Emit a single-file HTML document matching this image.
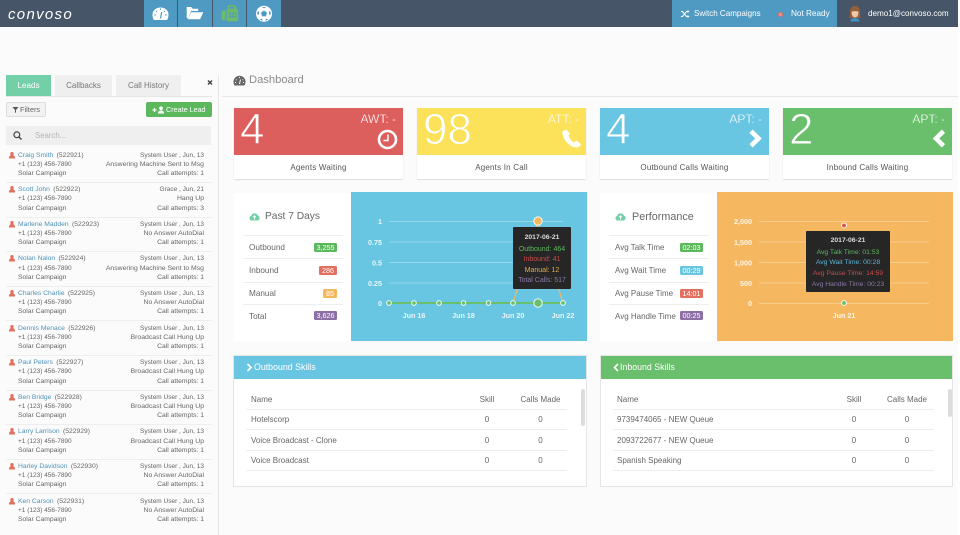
<!DOCTYPE html>
<html><head><meta charset="utf-8"><title>Convoso Dashboard</title>
<style>
*{box-sizing:border-box}
html,body{margin:0;padding:0;width:960px;height:535px;overflow:hidden;background:#fff}
body{font-family:"Liberation Sans",sans-serif;color:#666;position:relative}
#p{position:absolute;left:0;top:0;width:958px;height:535px;background:#fbfbfb;overflow:hidden;filter:blur(.3px)}
.a{position:absolute;white-space:nowrap}
.r{position:absolute;left:0;width:218px;height:35px;font-size:6.75px;color:#666}
.r span{position:absolute;white-space:nowrap;line-height:9px}
.r .n{left:18px;top:0}
.r .n b{font-weight:normal;color:#4f94b8}
.r .n i{font-style:normal;margin-left:1.500px}
.r .p{left:18px;top:9.300px;font-size:6.500px}
.r .k{left:18px;top:18.600px}
.r .u{right:14px;top:0;font-size:6.500px}
.r .s{right:14px;top:9.300px;font-size:6.850px}
.r .t{right:14px;top:18.600px}
.r svg{position:absolute;left:9px;top:1px}
.r hr{position:absolute;left:6px;width:206px;top:31.500px;margin:0;border:0;border-top:1px solid #eee}
.card{position:absolute;top:108px;width:169px;height:71px;background:#fff;box-shadow:0 1px 1px #ddd}
.card .h{position:absolute;left:0;top:0;width:100%;height:47px;background:var(--b)}
.card .num{position:absolute;left:6px;top:-3.500px;font-size:44px;line-height:50px;color:#fff;-webkit-text-stroke:.9px var(--b)}
.card .l{position:absolute;right:7px;top:4px;font-size:12px;line-height:14px;color:#fff;-webkit-text-stroke:.25px var(--b)}
.card .f{position:absolute;left:0;right:0;top:55px;text-align:center;font-size:8px;line-height:10px;color:#555;letter-spacing:.2px}
.card svg{position:absolute}
.lab{font-size:8.200px;color:#666;line-height:10px}
.ln{position:absolute;height:1px;background:#eee}
.bd{position:absolute;height:9px;border-radius:1.500px;color:#fff;font-size:7.200px;line-height:9px;text-align:center}
.tb{position:absolute;top:355px;height:132px;background:#fff;border:1px solid #e5e5e5}
.tb .hd{position:absolute;left:0;right:0;top:0;height:23px;color:#fff;font-size:8.800px;line-height:23px}
.tc{position:absolute;white-space:nowrap;font-size:8px;line-height:10px;color:#666}
.cc{position:absolute;white-space:nowrap;font-size:8px;line-height:10px;color:#666;text-align:center;transform:translateX(-50%)}
.tip{position:absolute;background:#262626;border-radius:1px;text-align:center;font-size:7px}
.tip div{position:absolute;left:0;right:0;line-height:9px}
svg text{font-family:"Liberation Sans",sans-serif}
</style></head><body>
<div id="p">

<!-- top bar -->
<div class="a" style="left:0;top:0;width:958px;height:27px;background:#465568"></div>
<div class="a" style="left:8px;top:5.500px;font-size:15px;line-height:18px;color:#fff;font-style:italic;letter-spacing:1.300px">convoso</div>
<div class="a" style="left:144px;top:0;width:33px;height:27px;background:#4f9ac2"></div>
<div class="a" style="left:178px;top:0;width:34px;height:27px;background:#4f9ac2"></div>
<div class="a" style="left:213px;top:0;width:33px;height:27px;background:#4f9ac2"></div>
<div class="a" style="left:247px;top:0;width:34px;height:27px;background:#4f9ac2"></div>
<svg class="a" style="left:144px;top:0" width="137" height="27">
 <path d="M9.600 19.500C8.900 18 8.500 16.200 8.500 14.500a8 7 0 0 1 16 0c0 1.700-.4 3.500-1.100 5-.2.400-.5.500-1 .500H10.600c-.5 0-.8-.1-1-.5z" fill="#fff"/>
 <path d="M16.500 18.500l1.200-6.500M12.200 11l.6.900M20.800 11l-.6.900M10.500 15h1.300M21.200 15h1.300M16.500 8.500v1.400" stroke="#4f9ac2" stroke-width="1.200" fill="none"/>
 <path d="M42.700 18V7h4.500l1.500 1.800h5.500v2.200H47L44.200 18.500zM47 12.300H59.300L56 19.300H44z" fill="#fff"/>
 <path d="M78.700 10.500h3v9.700h-3a1 1 0 0 1-1-1v-7.700a1 1 0 0 1 1-1zM82.700 9.500h1V5.300h7l2 2.200v2h.5a1 1 0 0 1 1 1v9.700a1 1 0 0 1-1 1H82.700z" fill="#6dbb6a"/>
 <path d="M85.200 12.500h2v2h-2zM88.200 12.500h2v2h-2zM91 12.500h1.500v2H91zM85.200 15.500h2v2h-2zM88.200 15.500h2v2h-2zM91 15.500h1.500v2H91zM85 6.800h5v2h-5z" fill="#4f9ac2"/>
 <circle cx="120" cy="13.700" r="8" fill="#fff"/>
 <path d="M120 10.500l3.100 2.300-1.200 3.600h-3.800l-1.200-3.600z" fill="#4f9ac2"/>
 <path d="M117.800 7h4.400L120 8.300zM113.300 11.600l1.500-.4.300 2.800-1.500 1.300zM126.700 11.600l-1.500-.4-.3 2.800 1.500 1.300zM116 19.200l2-.5.800 1.500-1.200.3zM124 19.200l-2-.5-.8 1.500 1.200.3z" fill="#4f9ac2"/>
</svg>
<div class="a" style="left:672px;top:0;width:165px;height:27px;background:#4f9ac2"></div>
<svg class="a" style="left:680px;top:10px" width="10" height="8"><path d="M1 1.500h1.500l4 5H8M1 6.500h1.500l4-5H8" fill="none" stroke="#fff" stroke-width="1.100"/><path d="M7.500 0l2 1.500-2 1.500zM7.500 5l2 1.500-2 1.500z" fill="#fff"/></svg>
<div class="a" style="left:694px;top:9px;font-size:8.050px;line-height:10px;color:#fff">Switch Campaigns</div>
<div class="a" style="left:778px;top:11.500px;width:5px;height:5px;border-radius:50%;border:1.500px solid #e2705f;background:#d99"></div>
<div class="a" style="left:791px;top:9px;font-size:8.200px;line-height:10px;color:#fff">Not Ready</div>
<svg class="a" style="left:848px;top:5px" width="14" height="17">
 <path d="M7 1C3 1 2 4 2 8c0 3-.5 4-.5 5h11c0-1-.5-2-.5-5 0-4-1-7-5-7z" fill="#97603a"/>
 <ellipse cx="7" cy="8" rx="3.400" ry="4.400" fill="#f0c9a8"/>
 <path d="M3.500 6.500C4 4 6 3 7 3s3 1 3.500 3.500C8 6 6 6 3.500 6.500z" fill="#97603a"/>
 <path d="M2.500 16.500c0-2.500 2-3.500 4.500-3.500s4.500 1 4.500 3.500z" fill="#3f93c4"/>
</svg>
<div class="a" style="left:868px;top:9px;font-size:8.100px;line-height:10px;color:#fff">demo1@convoso.com</div>

<!-- sidebar -->
<div class="a" style="left:218px;top:75px;width:1px;height:460px;background:#e6e6e6"></div>
<div class="a" style="left:6px;top:75px;width:45px;height:21px;background:#72cfa7;color:#fff;font-size:8.200px;line-height:21px;text-align:center">Leads</div>
<div class="a" style="left:55px;top:75px;width:57px;height:21px;background:#efefef;color:#777;font-size:8px;line-height:21px;text-align:center">Callbacks</div>
<div class="a" style="left:116px;top:75px;width:65px;height:21px;background:#efefef;color:#777;font-size:8px;line-height:21px;text-align:center">Call History</div>
<div class="a" style="left:6px;top:96px;width:206px;height:1px;background:#e6e6e6"></div>
<svg class="a" style="left:207px;top:79px" width="6" height="7"><path d="M1 1.500l4 4M5 1.500l-4 4" stroke="#444" stroke-width="1.500"/></svg>
<div class="a" style="left:6px;top:102px;width:40px;height:15px;background:#f2f2f2;border:1px solid #ddd;border-radius:2px"></div>
<svg class="a" style="left:12px;top:106px" width="7" height="7"><path d="M.5 1h6L4 4v3L3 6.300V4z" fill="#555"/></svg>
<div class="a" style="left:20px;top:105px;font-size:7.400px;line-height:9px;color:#666">Filters</div>
<div class="a" style="left:146px;top:102px;width:66px;height:15px;background:#5cb85c;border-radius:2px;color:#fff;font-size:7.200px;line-height:15px;padding-left:20px">Create Lead</div>
<svg class="a" style="left:152px;top:106px" width="13" height="8"><path d="M.5 4h4M2.500 2v4" stroke="#fff" stroke-width="1.200"/><circle cx="9" cy="2.200" r="1.800" fill="#fff"/><path d="M6 7.500c0-2.200 1-3 3-3s3 .8 3 3z" fill="#fff"/></svg>
<div class="a" style="left:6px;top:126px;width:205px;height:19px;background:#efefef"></div>
<svg class="a" style="left:13px;top:131px" width="9" height="9"><circle cx="3.800" cy="3.800" r="2.900" fill="none" stroke="#444" stroke-width="1.200"/><path d="M6 6l2.500 2.500" stroke="#444" stroke-width="1.400"/></svg>
<div class="a" style="left:35px;top:131px;font-size:7.800px;line-height:10px;color:#b5b5b5">Search...</div>

<div class="r" style="top:150.500px"><svg width="6" height="7"><circle cx="3" cy="1.700" r="1.700" fill="#e2705f"/><path d="M0 6.500c0-2.500 1-3.500 3-3.500s3 1 3 3.500z" fill="#e2705f"/></svg><span class="n"><b>Craig Smith</b> <i>(522921)</i></span><span class="p">+1 (123) 456-7890</span><span class="k">Solar Campaign</span><span class="u">System User , Jun, 13</span><span class="s">Answering Machine Sent to Msg</span><span class="t">Call attempts: 1</span><hr></div>
<div class="r" style="top:185.100px"><svg width="6" height="7"><circle cx="3" cy="1.700" r="1.700" fill="#e2705f"/><path d="M0 6.500c0-2.500 1-3.500 3-3.500s3 1 3 3.500z" fill="#e2705f"/></svg><span class="n"><b>Scott John</b> <i>(522922)</i></span><span class="p">+1 (123) 456-7890</span><span class="k">Solar Campaign</span><span class="u">Grace , Jun, 21</span><span class="s">Hang Up</span><span class="t">Call attempts: 3</span><hr></div>
<div class="r" style="top:219.700px"><svg width="6" height="7"><circle cx="3" cy="1.700" r="1.700" fill="#e2705f"/><path d="M0 6.500c0-2.500 1-3.500 3-3.500s3 1 3 3.500z" fill="#e2705f"/></svg><span class="n"><b>Marlene Madden</b> <i>(522923)</i></span><span class="p">+1 (123) 456-7890</span><span class="k">Solar Campaign</span><span class="u">System User , Jun, 13</span><span class="s">No Answer AutoDial</span><span class="t">Call attempts: 1</span><hr></div>
<div class="r" style="top:254.300px"><svg width="6" height="7"><circle cx="3" cy="1.700" r="1.700" fill="#e2705f"/><path d="M0 6.500c0-2.500 1-3.500 3-3.500s3 1 3 3.500z" fill="#e2705f"/></svg><span class="n"><b>Nolan Nalon</b> <i>(522924)</i></span><span class="p">+1 (123) 456-7890</span><span class="k">Solar Campaign</span><span class="u">System User , Jun, 13</span><span class="s">Answering Machine Sent to Msg</span><span class="t">Call attempts: 1</span><hr></div>
<div class="r" style="top:288.900px"><svg width="6" height="7"><circle cx="3" cy="1.700" r="1.700" fill="#e2705f"/><path d="M0 6.500c0-2.500 1-3.500 3-3.500s3 1 3 3.500z" fill="#e2705f"/></svg><span class="n"><b>Charles Charlie</b> <i>(522925)</i></span><span class="p">+1 (123) 456-7890</span><span class="k">Solar Campaign</span><span class="u">System User , Jun, 13</span><span class="s">No Answer AutoDial</span><span class="t">Call attempts: 1</span><hr></div>
<div class="r" style="top:323.500px"><svg width="6" height="7"><circle cx="3" cy="1.700" r="1.700" fill="#e2705f"/><path d="M0 6.500c0-2.500 1-3.500 3-3.500s3 1 3 3.500z" fill="#e2705f"/></svg><span class="n"><b>Dennis Menace</b> <i>(522926)</i></span><span class="p">+1 (123) 456-7890</span><span class="k">Solar Campaign</span><span class="u">System User , Jun, 13</span><span class="s">Broadcast Call Hung Up</span><span class="t">Call attempts: 1</span><hr></div>
<div class="r" style="top:358.100px"><svg width="6" height="7"><circle cx="3" cy="1.700" r="1.700" fill="#e2705f"/><path d="M0 6.500c0-2.500 1-3.500 3-3.500s3 1 3 3.500z" fill="#e2705f"/></svg><span class="n"><b>Paul Peters</b> <i>(522927)</i></span><span class="p">+1 (123) 456-7890</span><span class="k">Solar Campaign</span><span class="u">System User , Jun, 13</span><span class="s">Broadcast Call Hung Up</span><span class="t">Call attempts: 1</span><hr></div>
<div class="r" style="top:392.700px"><svg width="6" height="7"><circle cx="3" cy="1.700" r="1.700" fill="#e2705f"/><path d="M0 6.500c0-2.500 1-3.500 3-3.500s3 1 3 3.500z" fill="#e2705f"/></svg><span class="n"><b>Ben Bridge</b> <i>(522928)</i></span><span class="p">+1 (123) 456-7890</span><span class="k">Solar Campaign</span><span class="u">System User , Jun, 13</span><span class="s">Broadcast Call Hung Up</span><span class="t">Call attempts: 1</span><hr></div>
<div class="r" style="top:427.300px"><svg width="6" height="7"><circle cx="3" cy="1.700" r="1.700" fill="#e2705f"/><path d="M0 6.500c0-2.500 1-3.500 3-3.500s3 1 3 3.500z" fill="#e2705f"/></svg><span class="n"><b>Larry Larrison</b> <i>(522929)</i></span><span class="p">+1 (123) 456-7890</span><span class="k">Solar Campaign</span><span class="u">System User , Jun, 13</span><span class="s">Broadcast Call Hung Up</span><span class="t">Call attempts: 1</span><hr></div>
<div class="r" style="top:461.900px"><svg width="6" height="7"><circle cx="3" cy="1.700" r="1.700" fill="#e2705f"/><path d="M0 6.500c0-2.500 1-3.500 3-3.500s3 1 3 3.500z" fill="#e2705f"/></svg><span class="n"><b>Harley Davidson</b> <i>(522930)</i></span><span class="p">+1 (123) 456-7890</span><span class="k">Solar Campaign</span><span class="u">System User , Jun, 13</span><span class="s">No Answer AutoDial</span><span class="t">Call attempts: 1</span><hr></div>
<div class="r" style="top:496.500px"><svg width="6" height="7"><circle cx="3" cy="1.700" r="1.700" fill="#e2705f"/><path d="M0 6.500c0-2.500 1-3.500 3-3.500s3 1 3 3.500z" fill="#e2705f"/></svg><span class="n"><b>Ken Carson</b> <i>(522931)</i></span><span class="p">+1 (123) 456-7890</span><span class="k">Solar Campaign</span><span class="u">System User , Jun, 13</span><span class="s">No Answer AutoDial</span><span class="t">Call attempts: 1</span></div>

<!-- heading -->
<svg class="a" style="left:233px;top:75px" width="13" height="11"><path d="M1.200 10C.7 9 .5 7.800.5 6.800a6 6 0 0 1 12 0c0 1-.2 2.200-.7 3.200-.1.300-.4.500-.8.500H2c-.4 0-.7-.2-.8-.5z" fill="#666"/><path d="M6.500 9l1-4.500M3 4.500l.5.700M10 4.500l-.5.700M2 7.500h1M10 7.500h1M6.500 2v1" stroke="#fbfbfb" stroke-width="1"/></svg>
<div class="a" style="left:249px;top:73px;font-size:11.200px;line-height:15px;color:#8a8a8a">Dashboard</div>
<div class="a" style="left:222px;top:96px;width:736px;height:1px;background:#e8e8e8"></div>

<!-- stat cards -->
<div class="card" style="left:234px;--b:#dd5f5d"><div class="h"></div><div class="num">4</div><div class="l">AWT: -</div>
<svg style="left:142.500px;top:20.500px" width="21" height="21"><circle cx="10.500" cy="10.500" r="8.500" fill="none" stroke="#fff" stroke-width="2.600"/><path d="M11 5.500V11.500H6.500" fill="none" stroke="#fff" stroke-width="1.500"/></svg>
<div class="f">Agents Waiting</div></div>
<div class="card" style="left:417px;--b:#fbe25a"><div class="h"></div><div class="num">98</div><div class="l">ATT: -</div>
<svg style="left:143.500px;top:19.500px" width="21" height="21"><path d="M5 1.500L1.500 3.500C.5 9 7 19 15.500 19.500c2 0 4-1.500 4.500-3.500l-4.500-3.500-2.500 2c-2.500-1-5-4.500-5.500-7.500L9 5.500z" fill="#fff"/></svg>
<div class="f">Agents In Call</div></div>
<div class="card" style="left:600px;--b:#68c6e2"><div class="h"></div><div class="num">4</div><div class="l">APT: -</div>
<svg style="left:147.500px;top:20px" width="16" height="21"><path d="M3 3.200l7.500 7.300L3 17.800" fill="none" stroke="#fff" stroke-width="4.600"/></svg>
<div class="f">Outbound Calls Waiting</div></div>
<div class="card" style="left:783px;--b:#6abf6c"><div class="h"></div><div class="num">2</div><div class="l">APT: -</div>
<svg style="left:147.500px;top:20px" width="16" height="21"><path d="M12.500 3.200L5 10.500l7.500 7.300" fill="none" stroke="#fff" stroke-width="4.600"/></svg>
<div class="f">Inbound Calls Waiting</div></div>

<!-- past 7 days -->
<div class="a" style="left:234px;top:193px;width:117px;height:148px;background:#fff"></div>
<div class="a" style="left:351px;top:192px;width:236px;height:149px;background:#68c6e2"></div>
<svg class="a" style="left:249px;top:212px" width="11" height="9"><path d="M2.500 8.500A2.300 2.300 0 0 1 2.200 4 3.500 3.500 0 0 1 8.800 3.500 2.600 2.600 0 0 1 8.500 8.500z" fill="#72cfa7"/><path d="M5.500 7.500V4M4 5.300l1.500-1.500L7 5.300" stroke="#fff" fill="none"/></svg>
<div class="a" style="left:265px;top:210px;font-size:10.200px;line-height:14px;color:#666">Past 7 Days</div>
<div class="ln" style="left:243px;top:235px;width:100px"></div><div class="ln" style="left:243px;top:258px;width:100px"></div><div class="ln" style="left:243px;top:282px;width:100px"></div><div class="ln" style="left:243px;top:304px;width:100px"></div>
<div class="a lab" style="left:249px;top:242.500px">Outbound</div><div class="a lab" style="left:249px;top:266px">Inbound</div><div class="a lab" style="left:249px;top:289px">Manual</div><div class="a lab" style="left:249px;top:312px">Total</div>
<div class="bd" style="left:314px;top:243px;width:23px;background:#5cb85c">3,255</div>
<div class="bd" style="left:319px;top:266px;width:18px;background:#e2705f">286</div>
<div class="bd" style="left:323px;top:289px;width:14px;background:#f5b75f">85</div>
<div class="bd" style="left:314px;top:311px;width:23px;background:#8c6fa5">3,626</div>

<svg class="a" style="left:351px;top:192px" width="236" height="149">
 <g stroke="#fff" stroke-opacity=".3"><path d="M38 29.500h174M38 50h174M38 70.500h174M38 91h174"/></g>
 <path d="M162 111l25-82 25 82" fill="none" stroke="#f5b75f" stroke-width="1.200"/>
 <path d="M38 111h174" stroke="#6abf6c" stroke-width="2"/>
 <g fill="#6abf6c" stroke="#fff" stroke-width=".9"><circle cx="38" cy="111" r="2.300"/><circle cx="63" cy="111" r="2.300"/><circle cx="88" cy="111" r="2.300"/><circle cx="112.500" cy="111" r="2.300"/><circle cx="137.500" cy="111" r="2.300"/><circle cx="162" cy="111" r="2.300"/><circle cx="212" cy="111" r="2.300"/><circle cx="187" cy="111" r="4.200"/></g>
 <circle cx="187" cy="29" r="4.200" fill="#f5b75f" stroke="#fff" stroke-width=".9"/>
 <g fill="#fff" font-size="7.200" font-weight="bold" fill-opacity=".85" text-anchor="end"><text x="31" y="32">1</text><text x="31" y="53">0.75</text><text x="31" y="73.500">0.5</text><text x="31" y="94">0.25</text><text x="31" y="114">0</text></g>
 <g fill="#fff" font-size="7.200" font-weight="bold" fill-opacity=".85" text-anchor="middle"><text x="63" y="126">Jun 16</text><text x="112.500" y="126">Jun 18</text><text x="162" y="126">Jun 20</text><text x="212" y="126">Jun 22</text></g>
</svg>
<div class="tip" style="left:513px;top:227px;width:58px;height:62px">
 <div style="top:5.500px;color:#ddd;font-weight:bold;font-size:6.800px">2017-06-21</div>
 <div style="top:17.500px;color:#5cb85c">Outbound: 464</div>
 <div style="top:28px;color:#c94b48">Inbound: 41</div>
 <div style="top:38.500px;color:#e8a950">Manual: 12</div>
 <div style="top:48.500px;color:#8a78a8">Total Calls: 517</div>
</div>

<!-- performance -->
<div class="a" style="left:600px;top:193px;width:117px;height:148px;background:#fff"></div>
<div class="a" style="left:717px;top:192px;width:236px;height:149px;background:#f5b860"></div>
<svg class="a" style="left:615px;top:212px" width="11" height="9"><path d="M2.500 8.500A2.300 2.300 0 0 1 2.200 4 3.500 3.500 0 0 1 8.800 3.500 2.600 2.600 0 0 1 8.500 8.500z" fill="#72cfa7"/><path d="M5.500 7.500V4M4 5.300l1.500-1.500L7 5.300" stroke="#fff" fill="none"/></svg>
<div class="a" style="left:632px;top:210px;font-size:10.800px;line-height:14px;color:#666">Performance</div>
<div class="ln" style="left:609px;top:235px;width:100px"></div><div class="ln" style="left:609px;top:258px;width:100px"></div><div class="ln" style="left:609px;top:282px;width:100px"></div><div class="ln" style="left:609px;top:304px;width:100px"></div>
<div class="a lab" style="left:615px;top:242.500px;font-size:8px">Avg Talk Time</div><div class="a lab" style="left:615px;top:266px;font-size:8px">Avg Wait Time</div><div class="a lab" style="left:615px;top:289px;font-size:8px">Avg Pause Time</div><div class="a lab" style="left:615px;top:312px;font-size:8px">Avg Handle Time</div>
<div class="bd" style="left:680px;top:243px;width:23px;background:#5cb85c">02:03</div>
<div class="bd" style="left:680px;top:266px;width:23px;background:#68c6e2">00:29</div>
<div class="bd" style="left:680px;top:289px;width:23px;background:#e2705f">14:01</div>
<div class="bd" style="left:680px;top:311px;width:23px;background:#8c6fa5">00:25</div>

<svg class="a" style="left:717px;top:192px" width="236" height="149">
 <g stroke="#fff" stroke-opacity=".3"><path d="M42 29.500h170M42 50h170M42 70.500h170M42 91h170M42 111.500h170"/></g>
 <circle cx="127" cy="33.500" r="2.400" fill="#d9534f" stroke="#fff" stroke-width=".9"/>
 <circle cx="127" cy="111" r="2.400" fill="#6abf6c" stroke="#fff" stroke-width=".9"/>
 <g fill="#fff" font-size="7.200" font-weight="bold" fill-opacity=".85" text-anchor="end"><text x="35" y="32">2,000</text><text x="35" y="53">1,500</text><text x="35" y="73.500">1,000</text><text x="35" y="94">500</text><text x="35" y="114">0</text></g>
 <text x="127" y="126" fill="#fff" fill-opacity=".85" font-size="7.200" font-weight="bold" text-anchor="middle">Jun 21</text>
</svg>
<div class="tip" style="left:806px;top:231px;width:84px;height:61px;font-size:6.800px">
 <div style="top:5.200px;color:#ddd;font-weight:bold;font-size:6.800px">2017-06-21</div>
 <div style="top:16.500px;color:#5cb85c">Avg Talk Time: 01:53</div>
 <div style="top:27.200px;color:#5bb5d5">Avg Wait Time: 00:28</div>
 <div style="top:37.800px;color:#c94b48">Avg Pause Time: 14:59</div>
 <div style="top:48.500px;color:#8a78a8">Avg Handle Time: 00:23</div>
</div>

<!-- outbound table -->
<div class="tb" style="left:233px;width:354px">
 <div class="hd" style="background:#68c6e2;padding-left:20px">Outbound Skills</div>
 <svg class="a" style="left:12px;top:7px" width="7" height="9"><path d="M1.500 1l3.500 3.500L1.500 8" fill="none" stroke="#fff" stroke-width="1.700"/></svg>
 <div class="tc" style="left:17px;top:38.500px">Name</div><div class="cc" style="left:253px;top:38.500px">Skill</div><div class="cc" style="left:306.500px;top:38.500px">Calls Made</div>
 <div class="ln" style="left:12px;width:321px;top:53px"></div>
 <div class="tc" style="left:17px;top:58.500px">Hotelscorp</div><div class="cc" style="left:253px;top:58.500px">0</div><div class="cc" style="left:306.500px;top:58.500px">0</div>
 <div class="ln" style="left:12px;width:321px;top:73px"></div>
 <div class="tc" style="left:17px;top:79.500px">Voice Broadcast - Clone</div><div class="cc" style="left:253px;top:79.500px">0</div><div class="cc" style="left:306.500px;top:79.500px">0</div>
 <div class="ln" style="left:12px;width:321px;top:94px"></div>
 <div class="tc" style="left:17px;top:100px">Voice Broadcast</div><div class="cc" style="left:253px;top:100px">0</div><div class="cc" style="left:306.500px;top:100px">0</div>
 <div class="ln" style="left:12px;width:321px;top:114px"></div>
 <div class="a" style="left:347px;top:33px;width:4px;height:37px;background:#ddd;border-radius:2px"></div>
</div>

<!-- inbound table -->
<div class="tb" style="left:600px;width:353px">
 <div class="hd" style="background:#6abf6c;padding-left:19px">Inbound Skills</div>
 <svg class="a" style="left:12px;top:7px" width="7" height="9"><path d="M5 1L1.500 4.500 5 8" fill="none" stroke="#fff" stroke-width="1.700"/></svg>
 <div class="tc" style="left:16px;top:38.500px">Name</div><div class="cc" style="left:253px;top:38.500px">Skill</div><div class="cc" style="left:306px;top:38.500px">Calls Made</div>
 <div class="ln" style="left:12px;width:321px;top:53px"></div>
 <div class="tc" style="left:16px;top:58.500px">9739474065 - NEW Queue</div><div class="cc" style="left:253px;top:58.500px">0</div><div class="cc" style="left:306px;top:58.500px">0</div>
 <div class="ln" style="left:12px;width:321px;top:73px"></div>
 <div class="tc" style="left:16px;top:79.500px">2093722677 - NEW Queue</div><div class="cc" style="left:253px;top:79.500px">0</div><div class="cc" style="left:306px;top:79.500px">0</div>
 <div class="ln" style="left:12px;width:321px;top:94px"></div>
 <div class="tc" style="left:16px;top:100px">Spanish Speaking</div><div class="cc" style="left:253px;top:100px">0</div><div class="cc" style="left:306px;top:100px">0</div>
 <div class="ln" style="left:12px;width:321px;top:114px"></div>
 <div class="a" style="left:347px;top:33px;width:4px;height:28px;background:#ddd;border-radius:2px"></div>
</div>

</div>
</body></html>
